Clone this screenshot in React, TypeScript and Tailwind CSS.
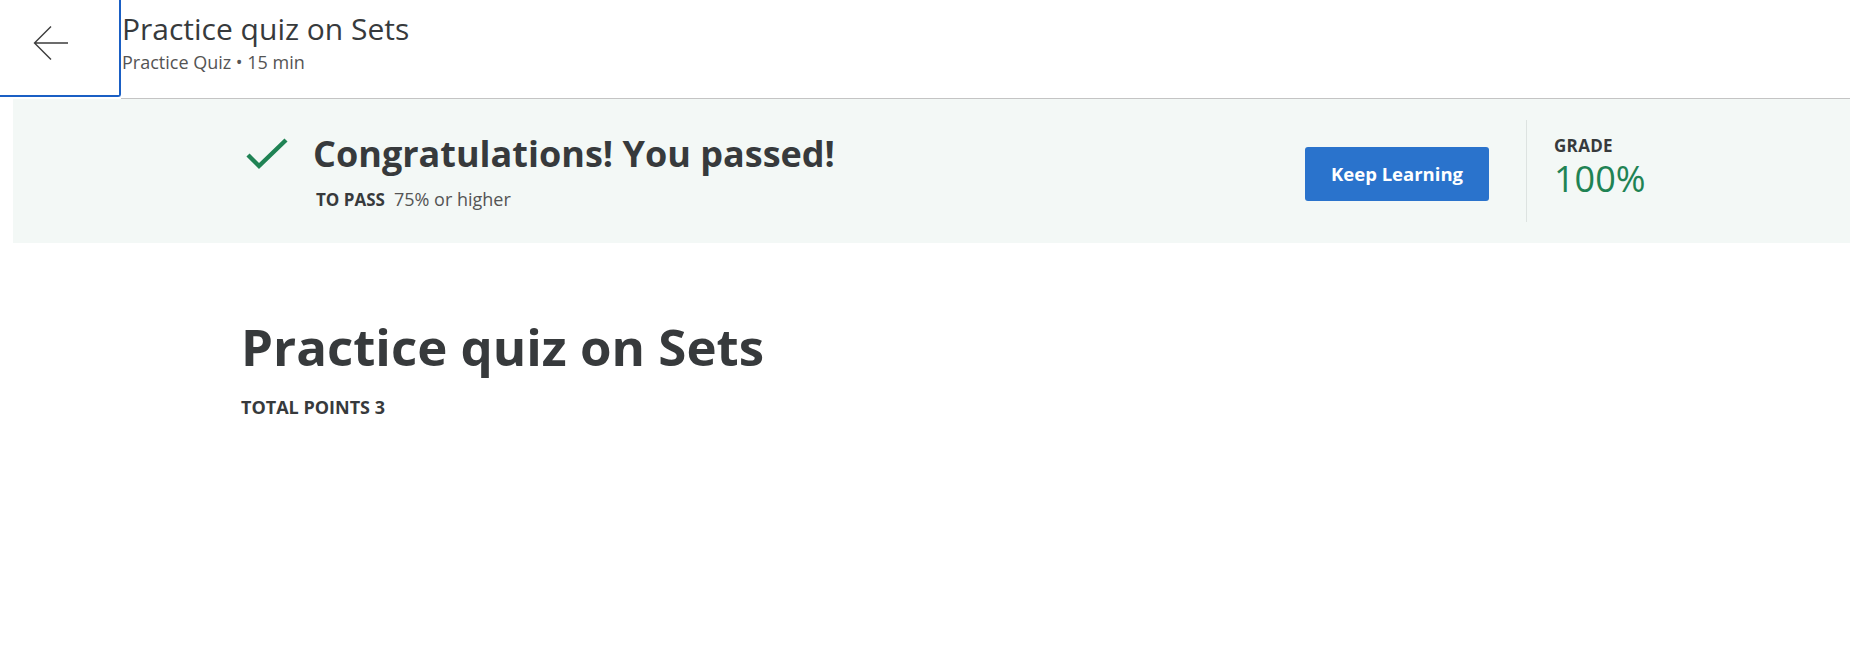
import React from 'react';

const font = { fontFamily: '"Open Sans", "Liberation Sans", sans-serif' };

const App: React.FC = () => {
  return (
    <div className="min-h-[648px] w-full bg-white text-[#373a3c]" style={font}>
      {/* Top bar */}
      <header className="flex h-[99px] items-start">
        <button className="flex h-[97px] w-[121px] shrink-0 items-start justify-start rounded-br-[3px] border-r-2 border-b-2 border-[#1a5fc4] bg-white pl-[33px] pt-[25px]">
          <svg width="36" height="36" viewBox="0 0 36 36" fill="none" stroke="#3c3c3c" strokeWidth="1.4">
            <path d="M35 18H1.5M18 1.5L1.5 18L18 34.5" />
          </svg>
        </button>
        <div className="flex h-[99px] flex-1 flex-col border-b border-[#c4c4c4] pl-px">
          <h1 className="mt-[10px] text-[30px] leading-[38px] font-normal text-[#373a3c]">Practice quiz on Sets</h1>
          <p className="mt-[3px] text-[18px] leading-[22px] text-[#545454]">Practice Quiz • 15 min</p>
        </div>
      </header>

      {/* Result banner */}
      <section className="ml-[13px] flex h-[144px] items-center bg-[#f3f8f6] pl-[232px]">
        <div className="flex flex-1 items-start gap-[24px]">
          <svg className="mt-[6px]" width="44" height="34" viewBox="0 0 44 34" fill="none" stroke="#1f8354" strokeWidth="4.4">
            <path d="M3 18L14 29L41 3" />
          </svg>
          <div className="-mt-[1px]">
            <h2 className="text-[36px] leading-[48px] font-bold text-[#373a3c]">Congratulations! You passed!</h2>
            <p className="mt-[9px] pl-[3px] text-[18px] leading-[24px] text-[#545454]">
              <span className="mr-[9px] text-[17px] font-bold text-[#373a3c]">TO PASS</span>
              75% or higher
            </p>
          </div>
        </div>
        <button className="mt-[6px] h-[54px] w-[184px] rounded-[3px] bg-[#2a73cc] text-[18.5px] font-bold text-white">Keep Learning</button>
        <div className="ml-[37px] h-[102px] w-px bg-[#dde3e1]" />
        <div className="-mt-[7px] w-[323px] pl-[27px]">
          <div className="text-[17px] leading-[22px] font-bold tracking-[0.3px] text-[#373a3c]">GRADE</div>
          <div className="text-[36px] leading-[44px] text-[#1f8354]">100%</div>
        </div>
      </section>

      {/* Quiz header */}
      <main className="pl-[241px] pt-[71px]">
        <h1 className="text-[51px] leading-[64px] font-bold text-[#373a3c]">Practice quiz on Sets</h1>
        <p className="mt-[17px] text-[18px] leading-[24px] font-bold text-[#373a3c]">TOTAL POINTS 3</p>
      </main>
    </div>
  );
};

export default App;
